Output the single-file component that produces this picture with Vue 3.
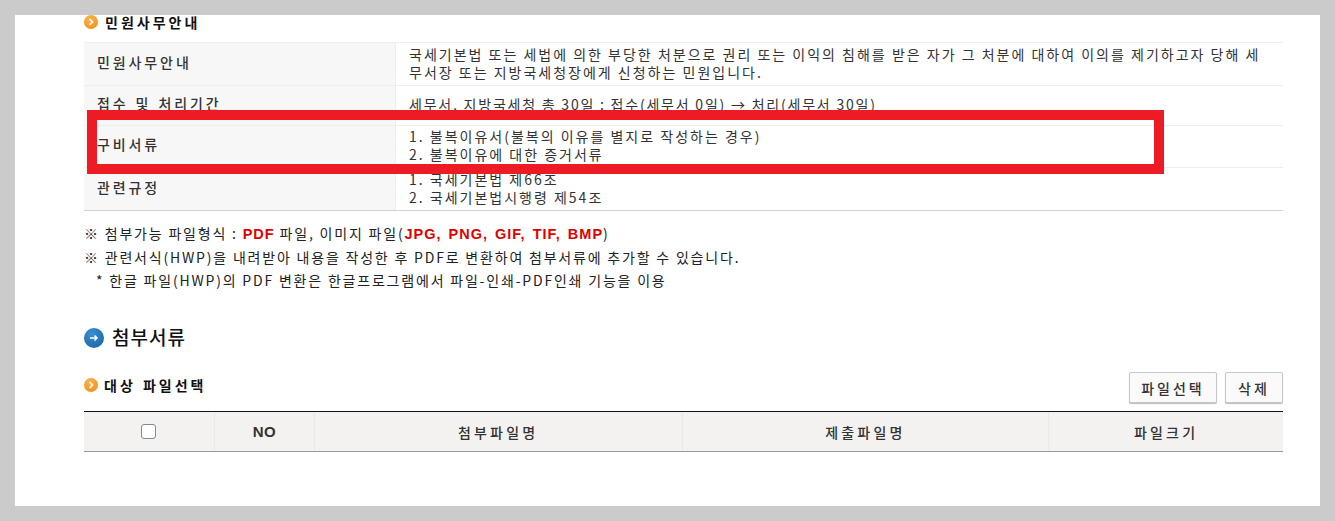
<script setup>
const rows = [
  { th: '민원사무안내', lines: ['국세기본법 또는 세법에 의한 부당한 처분으로 권리 또는 이익의 침해를 받은 자가 그 처분에 대하여 이의를 제기하고자 당해 세', '무서장 또는 지방국세청장에게 신청하는 민원입니다.'], h: 43 },
  { th: '접수 및 처리기간', lines: ['세무서, 지방국세청 총 30일 : 접수(세무서 0일) → 처리(세무서 30일)'], h: 40, tight: true },
  { th: '구비서류', lines: ['1. 불복이유서(불복의 이유를 별지로 작성하는 경우)', '2. 불복이유에 대한 증거서류'], h: 42 },
  { th: '관련규정', lines: ['1. 국세기본법 제66조', '2. 국세기본법시행령 제54조'], h: 42 },
]
const cols = [
  { label: 'NO', w: 100, latin: true },
  { label: '첨부파일명', w: 368 },
  { label: '제출파일명', w: 367 },
  { label: '파일크기', w: 234 },
]
</script>

<template>
  <div class="page">
    <main class="panel">
      <h3 class="sub first"><span class="dot orange"><svg viewBox="0 0 14 14" width="14" height="14"><path d="M5.5 4l3 3-3 3" fill="none" stroke="#fff" stroke-width="1.6"/></svg></span>민원사무안내</h3>
      <div class="info">
        <div v-for="r in rows" :key="r.th" class="row" :style="{ height: r.h + 'px' }">
          <div class="th">{{ r.th }}</div>
          <div class="td" :class="{ tight: r.tight }"><div v-for="l in r.lines" :key="l">{{ l }}</div></div>
        </div>
      </div>
      <div class="notes">
        <p>※ 첨부가능 파일형식 : <b>PDF</b> 파일, 이미지 파일(<b>JPG, PNG, GIF, TIF, BMP</b>)</p>
        <p>※ 관련서식(HWP)을 내려받아 내용을 작성한 후 PDF로 변환하여 첨부서류에 추가할 수 있습니다.</p>
        <p class="ind">* 한글 파일(HWP)의 PDF 변환은 한글프로그램에서 파일-인쇄-PDF인쇄 기능을 이용</p>
      </div>
      <h2 class="main"><span class="dot blue"><svg viewBox="0 0 20 20" width="20" height="20"><path d="M6 10h7M10.500 7.500L13 10l-2.500 2.500" fill="none" stroke="#fff" stroke-width="1.500"/></svg></span><span class="main-t">첨부서류</span></h2>
      <div class="bar">
        <h3 class="sub second"><span class="dot orange"><svg viewBox="0 0 14 14" width="14" height="14"><path d="M5.5 4l3 3-3 3" fill="none" stroke="#fff" stroke-width="1.6"/></svg></span>대상 파일선택</h3>
        <div class="btns"><button class="btn sel">파일선택</button><button class="btn del">삭제</button></div>
      </div>
      <div class="grid">
        <div class="gh chk"><input type="checkbox" /></div>
        <div v-for="c in cols" :key="c.label" class="gh" :class="{ latin: c.latin }" :style="{ width: c.w + 'px' }">{{ c.label }}</div>
      </div>
    </main>
    <div class="mark"></div>
  </div>
</template>

<style>
html, body { margin: 0; background: #cbcbcb; }
</style>

<style scoped>
.page {
  position: relative;
  height: 521px;
  padding: 15px;
  box-sizing: border-box;
  font-family: "Noto Sans CJK KR", "Liberation Sans", sans-serif;
  color: #333;
  overflow: hidden;
}
.panel {
  background: #fff;
  height: 491px;
  padding: 0 37px 0 69px;
  box-sizing: border-box;
}
.dot {
  display: inline-flex;
  border-radius: 50%;
  flex: none;
}
.orange { width: 14px; height: 14px; background: radial-gradient(circle at 40% 30%, #fdb24c, #f28a12); margin-right: 6px; }
.blue { width: 20px; height: 20px; background: radial-gradient(circle at 40% 30%, #3b8fd0, #14609f); margin-right: 8px; }
.sub {
  display: flex;
  align-items: center;
  margin: 0;
  font-size: 14px;
  font-weight: 700;
  color: #111;
  letter-spacing: 3px;
  word-spacing: 1px;
  line-height: 14px;
  white-space: nowrap;
}
.first { height: 14px; padding-bottom: 2px; margin-bottom: 11px; }
.first .orange { margin-right: 7px; }
.second { height: 14px; margin-bottom: 5px; }
.info { border-top: 1px solid #eee; border-bottom: 1px solid #d2d2d2; }
.row { display: flex; box-sizing: border-box; border-bottom: 1px solid #eee; }
.row:last-child { border-bottom: 0; }
.th {
  width: 312px;
  flex: none;
  box-sizing: border-box;
  padding: 0 0 5px 13px;
  background: #f7f7f7;
  border-right: 1px solid #eee;
  display: flex;
  align-items: center;
  font-size: 14px;
  font-weight: 500;
  letter-spacing: 2.9px;
  word-spacing: 1px;
  color: #333;
}
.td {
  flex: 1;
  padding: 0 0 3px 13px;
  display: flex;
  flex-direction: column;
  justify-content: center;
  font-size: 14px;
  line-height: 18px;
  font-weight: 400;
  color: #333;
  letter-spacing: 2px;
  white-space: nowrap;
}
.td.tight { letter-spacing: 1.78px; }
.notes {
  margin-top: 11px;
  font-size: 14px;
  line-height: 23px;
  letter-spacing: 1.8px;
  font-weight: 400;
  color: #222;
}
.notes p { margin: 0; white-space: nowrap; }
.notes b { color: #e00000; font-family: "Liberation Sans", sans-serif; font-weight: 700; font-size: 14.5px; letter-spacing: 1px; word-spacing: 2px; }
.ind { padding-left: 12px; }
.main {
  display: flex;
  align-items: center;
  margin: 34px 0 0;
  height: 24px;
  font-size: 19px;
  font-weight: 500;
  color: #111;
  letter-spacing: 1px;
}
.main-t { padding-bottom: 3px; line-height: 24px; }
.bar { display: flex; justify-content: space-between; align-items: center; margin-top: 22px; height: 31px; }
.btns { display: flex; gap: 8px; }
.btn {
  height: 31px;
  box-sizing: border-box;
  border: 1px solid #c8c8c8;
  border-radius: 2px;
  background: #fafafa;
  box-shadow: 0 1px 1px #bbb;
  font: 500 14px "Noto Sans CJK KR", sans-serif;
  color: #333;
  padding: 0;
  letter-spacing: 3px;
}
.sel { width: 88px; }
.del { width: 58px; }
.grid {
  display: flex;
  margin-top: 8px;
  border-top: 1px solid #111;
  border-bottom: 1px solid #9a9a9a;
  height: 39px;
  background: #f4f2f1;
}
.gh {
  box-sizing: border-box;
  display: flex;
  align-items: center;
  justify-content: center;
  border-right: 1px solid #eae9e7;
  font-size: 14px;
  font-weight: 500;
  letter-spacing: 3.2px;
  color: #333;
}
.gh:last-child { border-right: 0; }
.gh.latin { font-family: "Liberation Sans", sans-serif; font-size: 15px; font-weight: 700; letter-spacing: 0.3px; }
.chk { width: 131px; }
.chk input {
  appearance: none;
  width: 15px;
  height: 15px;
  margin: 0;
  background: #fff;
  border: 1.500px solid #8a8a8a;
  border-radius: 3px;
  box-sizing: border-box;
}
.mark {
  position: absolute;
  left: 87px;
  top: 110px;
  width: 1077px;
  height: 64px;
  box-sizing: border-box;
  border: 10px solid #ed1c24;
}
</style>
